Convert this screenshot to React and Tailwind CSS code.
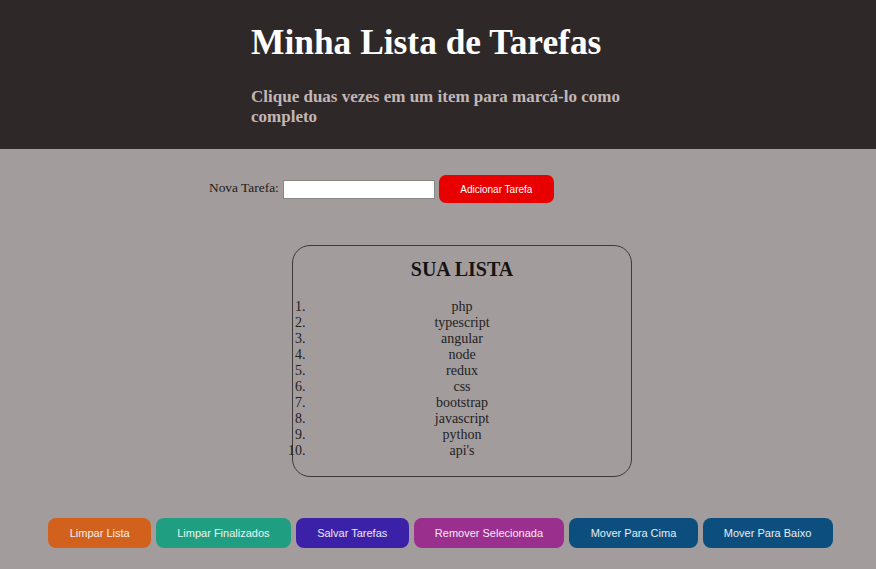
const tarefas = [
  "php",
  "typescript",
  "angular",
  "node",
  "redux",
  "css",
  "bootstrap",
  "javascript",
  "python",
  "api's",
];

const botoes = [
  { label: "Limpar Lista", cor: "bg-[#d2611d]" },
  { label: "Limpar Finalizados", cor: "bg-[#1f9e82]" },
  { label: "Salvar Tarefas", cor: "bg-[#3a21a8]" },
  { label: "Remover Selecionada", cor: "bg-[#9b2f8e]" },
  { label: "Mover Para Cima", cor: "bg-[#0c4f7f]" },
  { label: "Mover Para Baixo", cor: "bg-[#0c4f7f]" },
];

export default function App() {
  return (
    <div className="min-h-[569px] bg-[#a39c9c] font-['Liberation_Serif',serif] text-[#1c1a1a]">
      {/* cabeçalho */}
      <header className="bg-[#2f2828] pt-[22px] pb-[22px] pl-[251px]">
        <h1 className="text-[35.4px] leading-[41px] font-bold text-white">
          Minha Lista de Tarefas
        </h1>
        <h3 className="mt-[24px] w-[400px] text-[17px] leading-[20px] font-bold text-[#c2b6b6]">
          Clique duas vezes em um item para marcá-lo como completo
        </h3>
      </header>

      {/* nova tarefa */}
      <div className="mt-[26px] ml-[209px] flex items-center gap-[4px]">
        <label className="text-[13.4px] -mt-[2px]">Nova Tarefa:</label>
        <input
          type="text"
          className="w-[152px] h-[19px] bg-white border border-[#8a8585] outline-none"
        />
        <button className="h-[28px] w-[115px] rounded-[7px] bg-[#e80000] text-white text-[10px] font-['Liberation_Sans',sans-serif]">
          Adicionar Tarefa
        </button>
      </div>

      {/* lista */}
      <div className="mt-[42px] ml-[292px] w-[340px] h-[232px] border border-[#3f3939] rounded-[18px] pt-[12px]">
        <h2 className="text-center text-[20px] leading-[23px] font-bold text-[#151313]">
          SUA LISTA
        </h2>
        <ol className="mt-[18px] px-4 list-decimal list-outside text-[14px] leading-[16px] text-[#222]">
          {tarefas.map((t, i) => (
            <li key={i} className="text-center">
              {t}
            </li>
          ))}
        </ol>
      </div>

      {/* ações */}
      <div className="mt-[41px] pl-[5px] flex justify-center gap-[5px]">
        {botoes.map((b, i) => (
          <button
            key={i}
            className={`${b.cor} h-[30px] px-[21.3px] rounded-[8px] text-[11px] text-white/90 font-['Liberation_Sans',sans-serif]`}
          >
            {b.label}
          </button>
        ))}
      </div>
    </div>
  );
}
